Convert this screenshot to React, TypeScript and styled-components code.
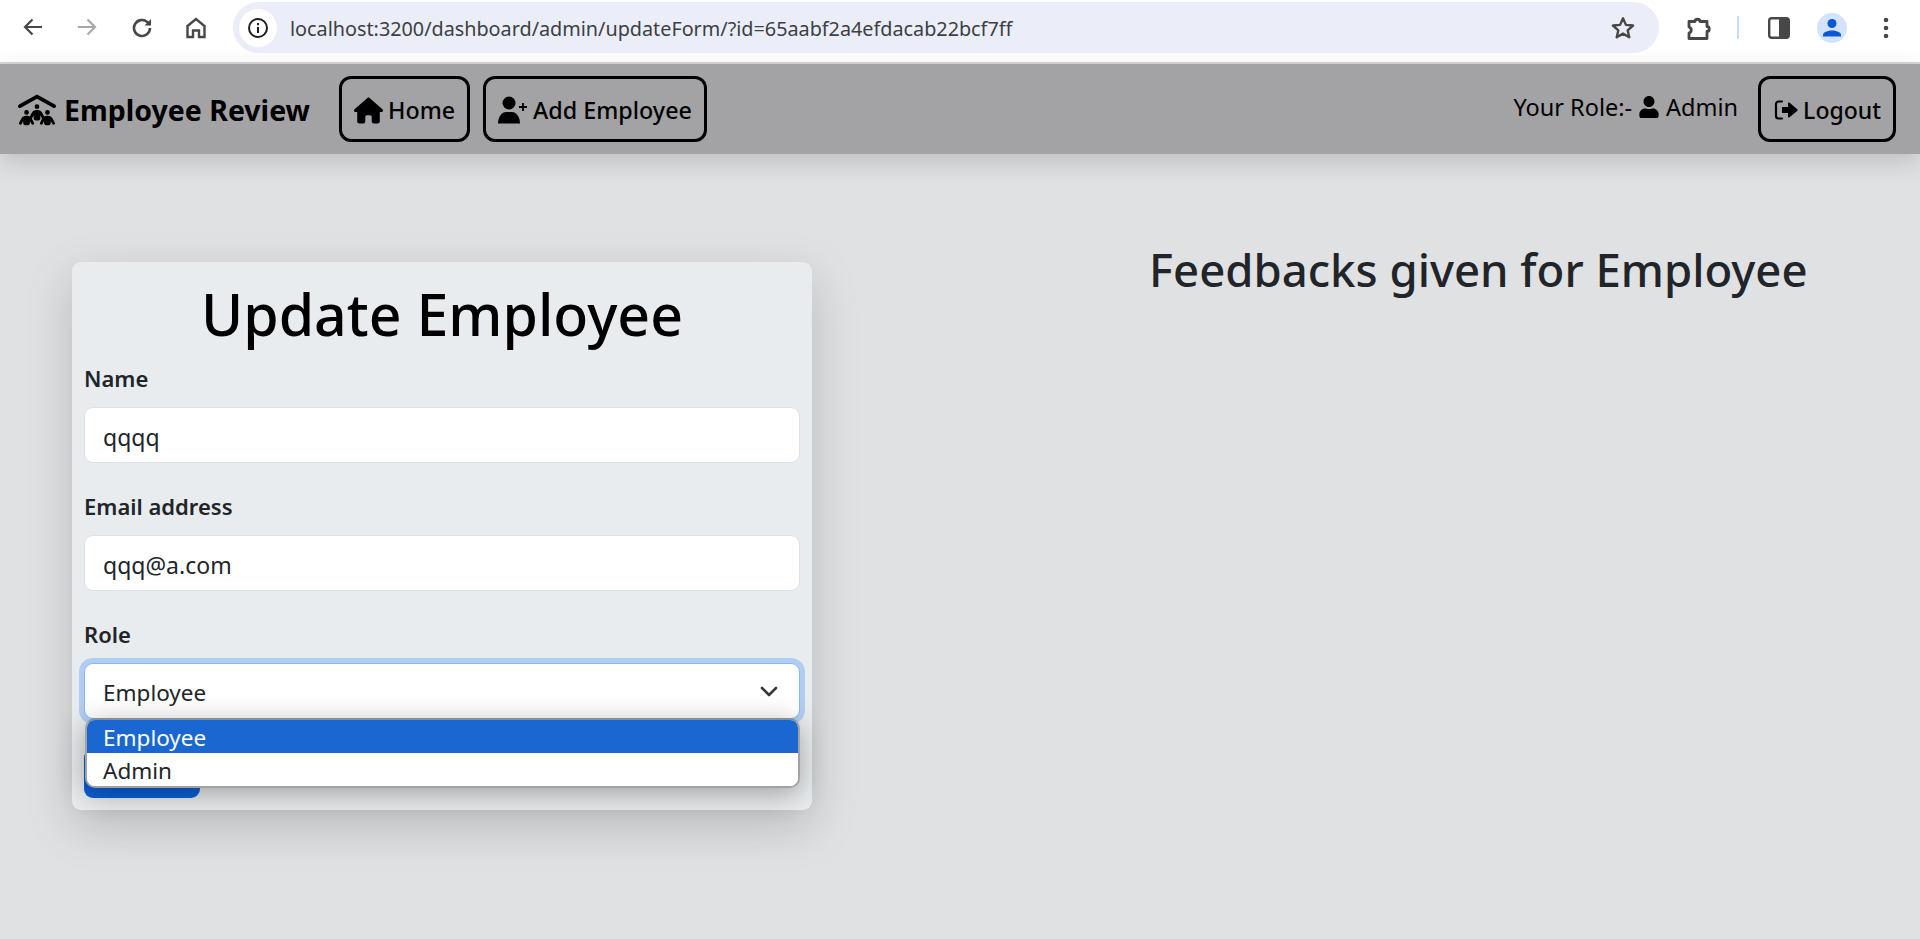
import styled, { createGlobalStyle } from "styled-components";
import { FaUser } from "react-icons/fa";
import { FaHouse, FaPeopleRoof } from "react-icons/fa6";

const GlobalStyle = createGlobalStyle`
  html, body {
    margin: 0;
    height: 100%;
    overflow: hidden;
    background: #e0e1e3;
    font-family: "Noto Sans", "Open Sans", sans-serif;
  }
  * {
    box-sizing: border-box;
  }
`;

const ChromeBar = styled.div`
  height: 64px;
  background: #fff;
  border-bottom: 2px solid #d6d6d8;
  display: flex;
  align-items: center;
  padding: 0 0 7px 0;
`;

const ChromeIcon = styled.div<{ $w: number }>`
  width: ${(p) => p.$w}px;
  display: flex;
  justify-content: center;
  flex-shrink: 0;
`;

const NavButtons = styled.div`
  display: flex;
  padding-left: 6px;
  margin-right: 11px;
`;

const Omnibox = styled.div`
  width: 1426px;
  height: 51px;
  border-radius: 26px;
  background: #ebeef8;
  display: flex;
  align-items: center;
  padding-left: 6px;
  flex-shrink: 0;
`;

const InfoBadge = styled.div`
  width: 38px;
  height: 38px;
  border-radius: 50%;
  background: #fff;
  display: flex;
  align-items: center;
  justify-content: center;
`;

const UrlText = styled.span`
  margin-left: 13px;
  padding-top: 1px;
  font-size: 19.8px;
  color: #3c3f43;
  flex: 1;
`;

const StarWrap = styled.div`
  margin-right: 23px;
  display: flex;
`;

const ChromeRight = styled.div`
  display: flex;
  align-items: center;
  padding-left: 25px;
`;

const Separator = styled.div`
  width: 2px;
  height: 23px;
  background: #c6dafc;
  margin: 0 29px 0 25px;
`;

const Avatar = styled.div`
  width: 30px;
  height: 30px;
  border-radius: 50%;
  background: #d3e3fd;
  display: flex;
  align-items: center;
  justify-content: center;
  margin: 0 36px 0 27px;
`;

const NavBar = styled.nav`
  height: 90px;
  background: #a3a3a5;
  box-shadow: 0 8px 24px rgba(0, 0, 0, 0.15);
  display: flex;
  align-items: center;
  padding: 0 24px 0 18px;
  color: #000;
  position: relative;
`;

const Brand = styled.div`
  display: flex;
  align-items: center;
  gap: 8px;
  padding-top: 2px;
  font-size: 28.5px;
  font-weight: 700;
  margin-right: 29px;
`;

const NavButton = styled.div`
  height: 66px;
  padding: 2px 12px 0;
  margin-right: 13px;
  border: 3px solid #000;
  border-radius: 12px;
  display: flex;
  align-items: center;
  gap: 5px;
  font-size: 23.3px;
  font-weight: 500;
`;

const RoleText = styled.div`
  margin-left: auto;
  margin-right: 20px;
  margin-bottom: 4px;
  display: flex;
  align-items: center;
  gap: 6px;
  font-size: 23.5px;
`;

const LogoutButton = styled(NavButton)`
  margin-right: 0;
  padding-left: 13px;
  font-size: 23px;
`;

const Main = styled.main`
  display: flex;
  align-items: flex-start;
  padding: 85px 0 0 72px;
`;

const Card = styled.form`
  position: relative;
  width: 740px;
  margin-top: 23px;
  background: #e9ecee;
  border-radius: 9px;
  padding: 15px 12px 12px;
  box-shadow: 0 16px 48px rgba(0, 0, 0, 0.175);
`;

const Title = styled.h1`
  margin: 0 0 14px;
  text-align: center;
  font-size: 57.2px;
  line-height: 74px;
  font-weight: 500;
  color: #000;
`;

const Field = styled.div`
  margin-bottom: 30px;
`;

const Label = styled.label`
  display: block;
  font-size: 22px;
  line-height: 26px;
  font-weight: 600;
  color: #212529;
  margin-bottom: 16px;
`;

const TextInput = styled.input`
  display: block;
  width: 100%;
  height: 56px;
  padding: 3px 18px 0;
  border: 1px solid #dee2e6;
  border-radius: 9px;
  background: #fff;
  font: inherit;
  font-size: 23px;
  color: #212529;
  outline: none;
`;

const SelectBox = styled.div`
  height: 56px;
  padding: 2px 20px 0 18px;
  border: 1px solid #86b7fe;
  border-radius: 9px;
  background: #fff;
  box-shadow: 0 0 0 5px rgba(13, 110, 253, 0.25);
  display: flex;
  align-items: center;
  justify-content: space-between;
  font-size: 22.5px;
  color: #212529;
`;

const SubmitButton = styled.button`
  display: block;
  width: 116px;
  height: 49px;
  border: none;
  border-radius: 9px;
  background: #0d5fd7;
`;

const Dropdown = styled.ul`
  position: absolute;
  left: 13px;
  right: 12px;
  top: 456px;
  margin: 0;
  padding: 0;
  list-style: none;
  background: #fff;
  border: 2px solid #a2a2a4;
  border-top-color: #8a8d92;
  border-radius: 10px;
  overflow: hidden;
  box-shadow: 0 6px 28px rgba(0, 0, 0, 0.32);
`;

const Option = styled.li<{ $active?: boolean }>`
  height: 33px;
  padding: 2px 0 0 16px;
  display: flex;
  align-items: center;
  font-size: 22.5px;
  background: ${(p) => (p.$active ? "#1a67d2" : "#fff")};
  color: ${(p) => (p.$active ? "#fff" : "#212529")};
`;

const FeedbackTitle = styled.h2`
  margin: 0 0 0 337px;
  font-size: 45.5px;
  line-height: 60px;
  font-weight: 500;
  color: #212529;
  white-space: nowrap;
`;

const Stroke = styled.svg`
  display: block;
`;

export default function App() {
  return (
    <>
      <GlobalStyle />
      <ChromeBar>
        <NavButtons>
          <ChromeIcon $w={54}>
            <Stroke width="22" height="22" viewBox="0 0 22 22" fill="none" stroke="#474747" strokeWidth="2.2">
              <path d="M20 11H3M10.5 3.5 3 11l7.5 7.5" />
            </Stroke>
          </ChromeIcon>
          <ChromeIcon $w={54}>
            <Stroke width="22" height="22" viewBox="0 0 22 22" fill="none" stroke="#a8a8a8" strokeWidth="2.2">
              <path d="M2 11h17M11.5 3.5 19 11l-7.5 7.5" />
            </Stroke>
          </ChromeIcon>
          <ChromeIcon $w={56}>
            <Stroke width="24" height="24" viewBox="0 0 24 24" fill="none" stroke="#474747" strokeWidth="2.6">
              <path d="M20 12a8 8 0 1 1-2.6-5.9L20 8.500" />
              <path d="M21 3v6.500h-6.500" fill="#474747" stroke="none" />
            </Stroke>
          </ChromeIcon>
          <ChromeIcon $w={52}>
            <Stroke width="22" height="24" viewBox="0 0 22 24" fill="none" stroke="#474747" strokeWidth="2.4">
              <path d="M2.500 10 11 3l8.500 7v11H14v-6.500H8V21H2.500z" />
            </Stroke>
          </ChromeIcon>
        </NavButtons>
        <Omnibox>
          <InfoBadge>
            <Stroke width="22" height="22" viewBox="0 0 22 22" fill="none" stroke="#1f1f1f" strokeWidth="2">
              <circle cx="11" cy="11" r="9" />
              <path d="M11 10v6M11 6v2.200" />
            </Stroke>
          </InfoBadge>
          <UrlText>localhost:3200/dashboard/admin/updateForm/?id=65aabf2a4efdacab22bcf7ff</UrlText>
          <StarWrap>
            <Stroke width="26" height="26" viewBox="0 0 24 24" fill="none" stroke="#474747" strokeWidth="2.2" strokeLinejoin="round">
              <path d="m12 3 2.700 6.100 6.600.6-5 4.400 1.500 6.500L12 17.200 6.200 20.600l1.500-6.500-5-4.400 6.600-.6z" />
            </Stroke>
          </StarWrap>
        </Omnibox>
        <ChromeRight>
          <Stroke width="28" height="28" viewBox="0 0 28 28" fill="none" stroke="#474747" strokeWidth="2.800" strokeLinejoin="round">
            <path d="M5 7.500h6c0-3 5-3 5 0h7v5c3 0 3 5 0 5v7H5v-5.500c3-1 3-5 0-6z" />
          </Stroke>
          <Separator />
          <Stroke width="22" height="22" viewBox="0 0 22 22">
            <rect x="1.200" y="1.200" width="19.600" height="19.600" rx="2.500" fill="none" stroke="#474747" strokeWidth="2.400" />
            <rect x="11" y="1" width="10" height="20" rx="2" fill="#474747" />
          </Stroke>
          <Avatar>
            <Stroke width="20" height="20" viewBox="0 0 20 20" fill="#0b57d0">
              <circle cx="10" cy="5.500" r="4.500" />
              <path d="M1 18.500v-1.500c0-3 5-4.500 9-4.500s9 1.500 9 4.500v1.500z" />
            </Stroke>
          </Avatar>
          <Stroke width="6" height="22" viewBox="0 0 6 22" fill="#474747">
            <circle cx="3" cy="3" r="2.300" />
            <circle cx="3" cy="11" r="2.300" />
            <circle cx="3" cy="19" r="2.300" />
          </Stroke>
        </ChromeRight>
      </ChromeBar>
      <NavBar>
        <Brand>
          <FaPeopleRoof size={38} />
          Employee Review
        </Brand>
        <NavButton>
          <FaHouse size={29} />
          Home
        </NavButton>
        <NavButton>
          <Stroke width="30" height="28" viewBox="0 0 30 28">
            <circle cx="11" cy="7" r="6.500" />
            <path d="M0 27.500c0-7 4-11.500 8-11.500h6c4 0 8 4.500 8 11.500z" />
            <path d="M21 11h8M25 7v8" stroke="#000" strokeWidth="1.800" />
          </Stroke>
          Add Employee
        </NavButton>
        <RoleText>
          Your Role:-
          <FaUser size={22} />
          Admin
        </RoleText>
        <LogoutButton>
          <Stroke width="24" height="20" viewBox="0 0 24 20">
            <path d="M8 1.500H4.500A2.500 2.500 0 0 0 2 4v12a2.500 2.500 0 0 0 2.500 2.500H8" fill="none" stroke="#000" strokeWidth="2.200" strokeLinecap="round" />
            <path d="M8 7h6V3.200c0-.7.800-1 1.300-.6l8 6.600c.5.400.5 1.200 0 1.600l-8 6.600c-.5.400-1.300.1-1.300-.6V13H8z" />
          </Stroke>
          Logout
        </LogoutButton>
      </NavBar>
      <Main>
        <Card>
          <Title>Update Employee</Title>
          <Field>
            <Label>Name</Label>
            <TextInput readOnly value="qqqq" />
          </Field>
          <Field>
            <Label>Email address</Label>
            <TextInput readOnly value="qqq@a.com" />
          </Field>
          <Field>
            <Label>Role</Label>
            <SelectBox>
              Employee
              <Stroke width="20" height="14" viewBox="0 0 20 14" fill="none" stroke="#343a40" strokeWidth="2.600" strokeLinecap="round" strokeLinejoin="round">
                <path d="m3 3 7 7 7-7" />
              </Stroke>
            </SelectBox>
          </Field>
          <SubmitButton type="button" aria-label="Submit" />
          <Dropdown>
            <Option $active>Employee</Option>
            <Option>Admin</Option>
          </Dropdown>
        </Card>
        <FeedbackTitle>Feedbacks given for Employee</FeedbackTitle>
      </Main>
    </>
  );
}
